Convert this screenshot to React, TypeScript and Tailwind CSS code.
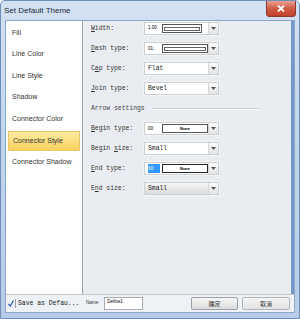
import { clsx } from 'clsx'

const pages = ['Fill', 'Line Color', 'Line Style', 'Shadow', 'Connector Color', 'Connector Style', 'Connector Shadow']

const mono = { fontFamily: '"Liberation Mono", "DejaVu Sans Mono", monospace' }

function Arrow() {
  return (
    <div className="w-[10px] h-full flex items-center justify-center border-l border-[#d6d6d6] bg-gradient-to-b from-[#fafafa] to-[#e4e4e4]">
      <svg width="5" height="3" viewBox="0 0 5 3">
        <path d="M0 0h5L2.5 3z" fill="#555" />
      </svg>
    </div>
  )
}

function Combo({ children, dim }: { children: React.ReactNode; dim?: boolean }) {
  return (
    <div
      className={clsx(
        'w-[75px] h-[13px] flex border border-[#cdd0d4] shadow-[0_0_0_1px_#f2f3f5]',
        dim ? 'bg-gradient-to-b from-[#f6f6f6] to-[#dcdcdc]' : 'bg-white',
      )}
    >
      <div className="flex-1 flex items-center pl-[3px] overflow-hidden">{children}</div>
      <Arrow />
    </div>
  )
}

function Sample({ n, label, sel }: { n: string; label?: string; sel?: boolean }) {
  return (
    <>
      <span
        className={clsx('text-[4.5px] leading-[9px] w-[12px] shrink-0', sel && 'bg-[#3399ff] text-white')}
        style={{ fontFamily: '"Liberation Sans", sans-serif' }}
      >
        {n}
      </span>
      <div
        className={clsx(
          'ml-[2px] w-[48px] h-[9px] flex items-center justify-center bg-white',
          sel ? 'border-[1.5px] border-[#222]' : 'border border-[#555]',
        )}
      >
        {label ? (
          <span className="text-[4px] font-bold" style={{ fontFamily: '"Liberation Sans", sans-serif' }}>
            {label}
          </span>
        ) : (
          <div className="w-[42px] h-[4px] border border-[#666]" />
        )}
      </div>
    </>
  )
}

function Row({ label, u, children }: { label: string; u: number; children: React.ReactNode }) {
  return (
    <div className="flex items-center h-[13px]">
      <span className="w-[53px] text-[6.4px] text-[#333]" style={mono}>
        {label.slice(0, u)}
        <span className="underline">{label[u]}</span>
        {label.slice(u + 1)}
      </span>
      {children}
    </div>
  )
}

function Text({ children }: { children: React.ReactNode }) {
  return (
    <span className="text-[6.4px] text-[#222]" style={mono}>
      {children}
    </span>
  )
}

export default function App() {
  return (
    <div
      className="w-[300px] h-[319px] flex flex-col bg-gradient-to-b from-[#d2e1f2] via-[#c0d4ec] to-[#b6cce8] border border-[#6f8fb8] rounded-t-[5px] overflow-hidden"
      style={{ fontFamily: '"Liberation Sans", Arial, sans-serif' }}
    >
      {/* Title bar */}
      <div className="h-[19px] flex items-start shrink-0">
        <span className="pl-[3px] pt-[4px] text-[8px] text-[#1e2a3a]">Set Default Theme</span>
        <div className="ml-auto mr-[3px] w-[30px] h-[17px] -mt-px flex items-center justify-center rounded-b-[3px] border border-[#8a3a32] bg-gradient-to-b from-[#e8a191] via-[#cf5a44] to-[#c0412b]">
          <svg width="8" height="7" viewBox="0 0 8 7">
            <path d="M1 0.5l6 6M7 0.5l-6 6" stroke="#fff" strokeWidth="1.8" />
          </svg>
        </div>
      </div>

      {/* Client area */}
      <div className="flex-1 mx-[4px] flex flex-col border border-[#8ca6c8] bg-[#eef1f5]">
        <div className="flex-1 flex">
          {/* Page list */}
          <div className="w-[77px] bg-white border-r border-[#a0a4aa] pt-px">
            {pages.map((p) => (
              <div key={p} className="h-[21.6px] flex items-center px-[2px]">
                <div
                  className={clsx(
                    'w-full h-[20px] flex items-center pl-[4px] text-[7px] text-[#333]',
                    p === 'Connector Style' &&
                      'bg-gradient-to-b from-[#fdeaa0] to-[#f9d35c] border border-[#e8c76a]',
                  )}
                >
                  {p}
                </div>
              </div>
            ))}
          </div>

          {/* Settings */}
          <div className="flex-1 bg-[#e9ecf1] border-r-[3px] border-[#7597cc] pl-[8px] pt-[1px] flex flex-col gap-[7px]">
            <Row label="Width:" u={0}>
              <Combo>
                <span className="text-[4.5px] w-[12px] shrink-0" style={{ fontFamily: '"Liberation Sans", sans-serif' }}>
                  1.00
                </span>
                <div className="ml-[2px] w-[40px] h-[9px] border border-[#555] flex items-center justify-center">
                  <div className="w-[36px] h-[4px] border border-[#666]" />
                </div>
              </Combo>
            </Row>
            <Row label="Dash type:" u={0}>
              <Combo>
                <Sample n="01:" />
              </Combo>
            </Row>
            <Row label="Cap type:" u={1}>
              <Combo>
                <Text>Flat</Text>
              </Combo>
            </Row>
            <Row label="Join type:" u={0}>
              <Combo>
                <Text>Bevel</Text>
              </Combo>
            </Row>

            <div className="h-[13px] -my-[7px] py-[7px] box-content flex items-center">
              <span className="text-[6.4px] text-[#444] whitespace-nowrap" style={mono}>
                Arrow settings
              </span>
              <div className="ml-[7px] w-[107px] h-[2px] border-t border-[#c9cdd3] border-b border-b-white" />
            </div>

            <Row label="Begin type:" u={0}>
              <Combo>
                <Sample n="00:" label="None" />
              </Combo>
            </Row>
            <Row label="Begin size:" u={6}>
              <Combo>
                <Text>Small</Text>
              </Combo>
            </Row>
            <Row label="End type:" u={0}>
              <Combo>
                <Sample n="00:" label="None" sel />
              </Combo>
            </Row>
            <Row label="End size:" u={1}>
              <Combo dim>
                <Text>Small</Text>
              </Combo>
            </Row>
          </div>
        </div>

        {/* Bottom bar */}
        <div className="h-[18px] shrink-0 flex items-center border-t border-[#c4c8ce] bg-[#eef1f5]">
          <div className="w-[77px] h-full flex items-center pl-[2px]">
            <svg width="6" height="7" viewBox="0 0 6 7">
              <path d="M0.5 3.8l1.8 2.2L5.5 0.5" stroke="#2a4fb0" strokeWidth="1.2" fill="none" />
            </svg>
            <div className="ml-px w-px h-[9px] bg-[#9aa0a8]" />
            <span className="ml-[2px] text-[6.4px] text-[#222]" style={mono}>
              Save as Defau...
            </span>
          </div>
          <span className="ml-[3px] text-[4.5px] text-[#333]">Name:</span>
          <div className="ml-[5px] w-[39px] h-[13px] bg-white border border-[#a9adb3] text-[4.5px] pl-[2px] pt-[1px]">
            Define1
          </div>
          <button className="ml-auto w-[47px] h-[13px] border border-[#9aa0a8] rounded-[2px] bg-gradient-to-b from-[#f6f6f6] to-[#dcdcdc] text-[6px] text-[#333]" style={{ fontFamily: '"Noto Sans CJK SC", sans-serif' }}>
            确定
          </button>
          <button className="ml-[4px] mr-[4px] w-[48px] h-[13px] border border-[#b0b5bb] rounded-[2px] bg-gradient-to-b from-[#f6f6f6] to-[#e2e2e2] text-[6px] text-[#333]" style={{ fontFamily: '"Noto Sans CJK SC", sans-serif' }}>
            取消
          </button>
        </div>
      </div>
      <div className="h-[5px] shrink-0" />
    </div>
  )
}
